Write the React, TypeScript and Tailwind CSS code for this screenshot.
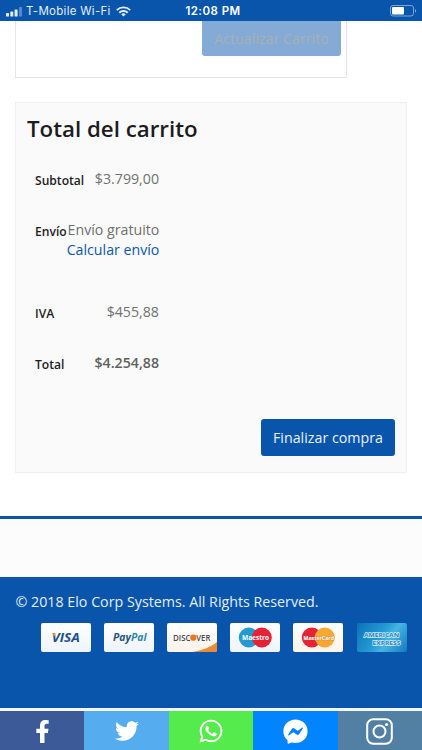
import { ReactNode } from 'react'
import { clsx } from 'clsx'
import { FaFacebookF, FaFacebookMessenger, FaTwitter, FaWhatsapp } from 'react-icons/fa'

const StatusBar = () => {
  return (
    <header className="grid h-[21px] shrink-0 grid-cols-[1fr_auto_1fr] items-center bg-[#0955ab] pt-0.5 pr-[5px] pl-[6px] font-['Inter','Liberation_Sans',sans-serif] text-[11.5px] leading-none text-[#e4eefa]">
      <div className="flex items-center">
        <svg width="17" height="10" viewBox="0 0 17 10" fill="currentColor">
          <rect x="0" y="6" width="3" height="3.5" rx=".6" />
          <rect x="4.3" y="4.5" width="3" height="5" rx=".6" />
          <rect x="8.6" y="2.5" width="3" height="7" rx=".6" />
          <rect x="13" y="0" width="3" height="9.5" rx=".6" opacity=".35" />
        </svg>
        <span className="ml-[3px] tracking-[0.28px] whitespace-nowrap">T-Mobile Wi-Fi</span>
        <svg className="ml-[5px]" width="15" height="11" viewBox="0 0 15 11" fill="none" stroke="currentColor" strokeWidth="1.9">
          <path d="M.8 4.1a9.6 9.6 0 0 1 13.4 0" />
          <path d="M3.3 6.7a6 6 0 0 1 8.4 0" />
          <path d="M7.5 10.6 5.2 8.3a3.4 3.4 0 0 1 4.6 0Z" fill="currentColor" stroke="none" />
        </svg>
      </div>
      <span className="pl-[3px] font-semibold tracking-[0.45px] text-white">12:08 PM</span>
      <svg className="mb-px justify-self-end" width="27" height="12" viewBox="0 0 27 12">
        <rect x=".5" y=".5" width="23" height="10.5" rx="2.5" fill="none" stroke="#7ea6d5" />
        <rect x="2" y="2" width="12" height="7.5" rx="1" fill="#fff" />
        <path d="M25 4v3.6c1.6-.4 1.6-3.2 0-3.6Z" fill="#7ea6d5" />
      </svg>
    </header>
  )
}

const TotalRow = ({
  label,
  className,
  children,
}: {
  label: string
  className?: string
  children: ReactNode
}) => {
  return (
    <div className={clsx('flex w-[124px] justify-between', className)}>
      <span className="pt-[2px] text-[12.1px] leading-[20px] font-semibold text-[#1d1d1f]">{label}</span>
      <div className="text-right text-[14.2px] leading-[20px] whitespace-nowrap text-[#707070]">
        {children}
      </div>
    </div>
  )
}

const CardFrame = ({ className, children }: { className?: string; children: ReactNode }) => {
  return (
    <div
      className={clsx(
        'h-[29px] w-[50px] overflow-hidden rounded-[2px]',
        className ?? 'bg-linear-to-b from-white to-[#edf4fa]',
      )}
    >
      <svg width="50" height="29" viewBox="0 0 50 29" fontFamily="Open Sans, sans-serif" fontWeight="700">
        {children}
      </svg>
    </div>
  )
}

const PaymentCards = () => {
  return (
    <div className="mt-[11px] flex justify-end gap-[13.2px]">
      <CardFrame>
        <text x="10.8" y="18.5" fontSize="11.5" fontStyle="italic" textLength="28" lengthAdjust="spacingAndGlyphs" fill="#20508f">
          VISA
        </text>
        <path d="M10.5 10.2h3.6l.9 4Z" fill="#e9a63a" />
      </CardFrame>
      <CardFrame>
        <text x="9" y="18" fontSize="10.5" fontStyle="italic" textLength="33.5" lengthAdjust="spacingAndGlyphs" fill="#29547f">
          Pay<tspan fill="#3188ad">Pal</tspan>
        </text>
      </CardFrame>
      <CardFrame className="bg-linear-to-b from-white to-[#fdf2e8]">
        <path d="M26 29Q42 26 50 19v10Z" fill="#ed8a35" />
        <text x="6" y="17.7" fontSize="8.5" fontWeight="600" textLength="17.5" lengthAdjust="spacingAndGlyphs" fill="#4a4a4e">
          DISC
        </text>
        <circle cx="26.3" cy="14.7" r="3.1" fill="#ee7425" />
        <text x="29.3" y="17.7" fontSize="8.5" fontWeight="600" textLength="14" lengthAdjust="spacingAndGlyphs" fill="#4a4a4e">
          VER
        </text>
      </CardFrame>
      <CardFrame>
        <circle cx="18.8" cy="14.5" r="10" fill="#239bd2" />
        <circle cx="31.8" cy="14.5" r="10" fill="#e52336" />
        <text x="12" y="17.3" fontSize="7.3" textLength="27" lengthAdjust="spacingAndGlyphs" fill="#fff">
          Maestro
        </text>
      </CardFrame>
      <CardFrame className="bg-linear-to-b from-white to-[#fdf4e8]">
        <circle cx="18.8" cy="14.5" r="10" fill="#e52335" />
        <circle cx="31.8" cy="14.5" r="10" fill="#f5a833" />
        <text x="10.5" y="17" fontSize="6" textLength="30.5" lengthAdjust="spacingAndGlyphs" fill="#fff" stroke="#b5623f" strokeWidth=".4" paintOrder="stroke">
          MasterCard
        </text>
      </CardFrame>
      <CardFrame className="bg-[linear-gradient(125deg,#0e70b8,#239bd4_45%,#46b5e3_62%,#1479be)]">
        <g fill="#2583c4" stroke="#cdeefb" strokeWidth="1.3" paintOrder="stroke" fontSize="6">
          <text x="7" y="14" textLength="35" lengthAdjust="spacingAndGlyphs">
            AMERICAN
          </text>
          <text x="15.5" y="21.5" textLength="28" lengthAdjust="spacingAndGlyphs">
            EXPRESS
          </text>
        </g>
      </CardFrame>
    </div>
  )
}

const InstagramIcon = () => {
  return (
    <svg width="27" height="27" viewBox="0 0 27 27" fill="none" stroke="currentColor" strokeWidth="2">
      <rect x="1.2" y="1.2" width="24.6" height="24.6" rx="6" />
      <circle cx="13.5" cy="13.5" r="6" />
      <circle cx="20.6" cy="6.5" r="1.6" fill="currentColor" stroke="none" />
    </svg>
  )
}

const socials = [
  { name: 'Facebook', color: 'bg-[#3d5a98]', icon: <FaFacebookF size={23} /> },
  { name: 'Twitter', color: 'bg-[#55acee]', icon: <FaTwitter size={24} /> },
  { name: 'WhatsApp', color: 'bg-[#55eb4c]', icon: <FaWhatsapp size={26} /> },
  { name: 'Messenger', color: 'bg-[#0084ff]', icon: <FaFacebookMessenger size={25} /> },
  { name: 'Instagram', color: 'bg-[#527fa4]', icon: <InstagramIcon /> },
]

const SocialBar = () => {
  return (
    <nav className="grid h-[42px] shrink-0 grid-cols-5 border-t-3 border-[#f3f7fb] text-white">
      {socials.map((social) => (
        <a key={social.name} aria-label={social.name} className={clsx('flex items-center justify-center pt-px', social.color)}>
          {social.icon}
        </a>
      ))}
    </nav>
  )
}

export default function App() {
  return (
    <div className="flex h-[750px] w-[422px] flex-col overflow-hidden bg-white font-['Open_Sans','Noto_Sans',sans-serif]">
      <StatusBar />

      <section className="ml-[15px] flex h-[57px] w-[332px] shrink-0 items-start justify-end border-x border-b border-[#e6e6e6] pr-[5px]">
        <button className="flex h-[35px] w-[139px] items-center justify-center rounded-b-[3px] bg-[#84aad6] text-[14.25px] text-[#a9aeb5]">
          Actualizar Carrito
        </button>
      </section>

      <section className="mt-6 ml-[15px] flex h-[371px] w-[392px] shrink-0 flex-col border border-[#f0f0f0] bg-[#fafafa] px-[11px]">
        <h2 className="mt-[9px] text-[22.3px] leading-[34px] font-semibold text-[#1c1c1e]">Total del carrito</h2>
        <div className="ml-2 flex flex-col">
          <TotalRow label="Subtotal" className="mt-[23px]">
            $3.799,00
          </TotalRow>
          <TotalRow label="Envío" className="mt-[29px]">
            Envío gratuito
            <a className="block text-[#0f57a8]">Calcular envío</a>
          </TotalRow>
          <TotalRow label="IVA" className="mt-[42px]">
            $455,88
          </TotalRow>
          <TotalRow label="Total" className="mt-[29px]">
            <span className="font-semibold text-[#606060]">$4.254,88</span>
          </TotalRow>
        </div>
        <button className="mt-auto mb-[16px] flex h-[37px] w-[134px] items-center justify-center self-end rounded-[3px] bg-[#0955ab] text-[14.25px] text-[#e9f2fc]">
          Finalizar compra
        </button>
      </section>

      <div className="mt-[43px] h-[61px] shrink-0 border-t-3 border-[#0d55a6] bg-[#fcfcfc]" />

      <footer className="flex-1 bg-[#0955ab] px-[15.5px] pt-[15px]">
        <p className="text-[14.25px] leading-[20px] whitespace-nowrap text-[#e4eefa]">
          © 2018 Elo Corp Systems. All Rights Reserved.
        </p>
        <PaymentCards />
      </footer>

      <SocialBar />
    </div>
  )
}
